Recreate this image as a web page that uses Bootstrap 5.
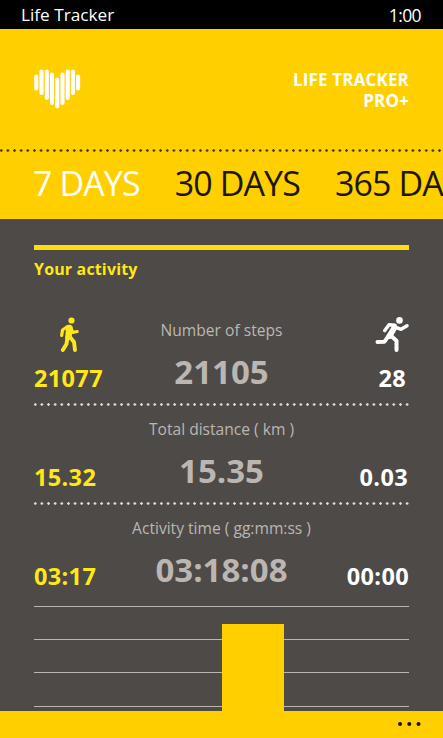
<!DOCTYPE html>
<html lang="en">
<head>
<meta charset="utf-8">
<meta name="viewport" content="width=device-width, initial-scale=1">
<title>Life Tracker</title>
<link href="https://cdn.jsdelivr.net/npm/bootstrap@5.3.0/dist/css/bootstrap.min.css" rel="stylesheet">
<style>
:root { --sun: #ffcf00; --stone: #4d4a48; --pale: #bcb6b2; --lemon: #ffe718; }
body { font-family: "Open Sans", "Noto Sans", sans-serif; background: var(--stone); }
.phone { height: 738px; }
.status { height: 29px; padding: 0 22px 0 21px; font-size: 17.2px; line-height: 30px; }
.status .clock { letter-spacing: -.6px; font-size: 17.5px; }
.masthead { height: 190px; background: var(--sun); }
.brand { height: 120px; padding: 40px 34px 0; }
.brand-name { font-size: 17px; line-height: 21px; letter-spacing: .15px; }
.dots { height: 3px; background: radial-gradient(circle, var(--dot) 0 1px, transparent 1.5px) -2.1px 0 / 6.65px 3px repeat-x; }
.periods { height: 67px; padding-left: 33px; gap: 35px; font-size: 34px; line-height: 63px; letter-spacing: -.9px; color: #1a1700; }
.panel { padding: 26px 34px 0; }
.rule { height: 5px; background: #ffdc0a; }
.heading { font-size: 16px; line-height: 38px; letter-spacing: .15px; color: var(--lemon); }
.metric { color: var(--pale); height: 96px; }
.metric-first { height: 115px; }
.metric-last { height: 101px; padding-bottom: 5px; }
.caption { font-size: 15.6px; line-height: 22px; }
.side { font-size: 23.5px; line-height: 30px; width: 90px; padding-bottom: 10px; letter-spacing: .35px; }
.side svg { margin-bottom: 10px; }
.side-end > div { padding-right: 1px; }
.side-end > .steps { padding-right: 3px; }
.lemon { color: var(--lemon); }
.total { font-size: 33px; line-height: 48px; height: 62px; padding-top: 7px; }
.chart { height: 105px; background: repeating-linear-gradient(var(--pale) 0 1px, transparent 1px 33.2px); padding: 18px 125px 0 188px; }
.appbar { height: 27px; background: var(--sun); padding-right: 21px; }
</style>
</head>
<body>
<main class="phone d-flex flex-column overflow-hidden">
  <div class="status bg-black text-white d-flex justify-content-between flex-shrink-0">
    <span class="app-name">Life Tracker</span><span class="clock">1:00</span>
  </div>
  <header class="masthead flex-shrink-0">
    <div class="brand d-flex justify-content-between">
      <svg width="47" height="42" viewBox="0 0 47 42" fill="none" stroke="#fff" stroke-width="4.1" stroke-linecap="round"><path d="M2.3 7.5v12M7.5 2.5v21.5M12.8 2.5v26.5M18 5.5v28.5M23.2 10.5v27M28.5 5.5v28.5M33.7 2.5v26.5M38.9 2.5v21.5M44.1 7.5v12"/></svg>
      <div class="brand-name text-white fw-bold text-end">LIFE TRACKER<br>PRO+</div>
    </div>
    <div class="dots" style="--dot:#493b00"></div>
    <nav class="periods d-flex text-nowrap overflow-hidden">
      <span class="text-white">7 DAYS</span><span>30 DAYS</span><span>365 DAYS</span>
    </nav>
  </header>
  <section class="panel flex-grow-1">
    <div class="rule"></div>
    <div class="heading fw-bold">Your activity</div>
    <div class="metric metric-first d-flex justify-content-between align-items-end">
      <div class="side lemon fw-bold">
        <svg class="d-block" width="68" height="36" viewBox="0 0 68 36" fill="none" stroke="currentColor" stroke-linecap="round" stroke-linejoin="round"><circle cx="37.5" cy="3.5" r="3.1" fill="currentColor" stroke="none"/><path d="M35.2 11 34.5 20" stroke-width="6.5"/><path d="M33.5 9.5 28.5 13 27.7 18.500M37 10.5 38.5 15.5 43.2 14.500" stroke-width="3.2"/><path d="M33.5 20 32.5 27 28.8 33M35.5 19.5 40 25 41 33" stroke-width="3.9"/></svg>
        <div>21077</div>
      </div>
      <div class="text-center text-nowrap"><div class="caption">Number of steps</div><div class="total fw-bold">21105</div></div>
      <div class="side side-end text-white fw-bold text-end">
        <svg class="d-block ms-auto" width="34" height="36" viewBox="0 0 34 36" fill="none" stroke="currentColor" stroke-linecap="round" stroke-linejoin="round"><circle cx="24.5" cy="3.4" r="3.3" fill="currentColor" stroke="none"/><path d="M19.5 10.5 14.5 19" stroke-width="5.8"/><path d="M20 8.3 14 7.800 9.8 13.600M21 10.3 26 12.3 32 8.700" stroke-width="3.4"/><path d="M14 18.3 9.5 24.700 2.5 25M16 18.700 21.5 23.700 21.5 33" stroke-width="4"/></svg>
        <div class="steps">28</div>
      </div>
    </div>
    <div class="dots" style="--dot:#e0dcd9"></div>
    <div class="metric d-flex justify-content-between align-items-end">
      <div class="side lemon fw-bold">15.32</div>
      <div class="text-center text-nowrap"><div class="caption">Total distance ( km )</div><div class="total fw-bold">15.35</div></div>
      <div class="side side-end text-white fw-bold text-end"><div>0.03</div></div>
    </div>
    <div class="dots" style="--dot:#e0dcd9"></div>
    <div class="metric metric-last d-flex justify-content-between align-items-end">
      <div class="side lemon fw-bold">03:17</div>
      <div class="text-center text-nowrap"><div class="caption">Activity time ( gg:mm:ss )</div><div class="total fw-bold">03:18:08</div></div>
      <div class="side side-end text-white fw-bold text-end">00:00</div>
    </div>
    <div class="chart"><div class="h-100" style="background:var(--sun)"></div></div>
  </section>
  <footer class="appbar d-flex align-items-center justify-content-end flex-shrink-0">
    <svg width="25" height="6" viewBox="0 0 25 6" fill="#171300"><circle cx="3" cy="2" r="2"/><circle cx="12.3" cy="2" r="2"/><circle cx="21.5" cy="2" r="2"/></svg>
  </footer>
</main>
<script src="https://cdn.jsdelivr.net/npm/bootstrap@5.3.0/dist/js/bootstrap.bundle.min.js"></script>
</body>
</html>
